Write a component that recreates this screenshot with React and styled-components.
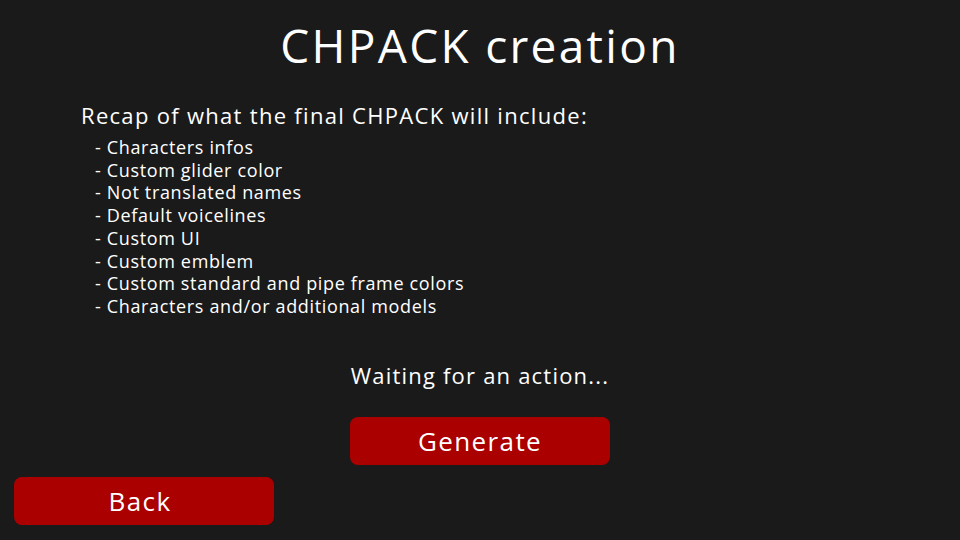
import React from "react";
import styled, { createGlobalStyle } from "styled-components";

const GlobalStyle = createGlobalStyle`
  html, body {
    margin: 0;
    padding: 0;
    background: #1a1a1a;
  }
  * {
    box-sizing: border-box;
  }
`;

const Screen = styled.div`
  width: 960px;
  height: 540px;
  background: #1a1a1a;
  color: #ffffff;
  font-family: "Open Sans", "Noto Sans", sans-serif;
  display: flex;
  flex-direction: column;
  overflow: hidden;
`;

const Title = styled.h1`
  margin: 15px 0 0;
  font-size: 46px;
  font-weight: 400;
  line-height: 60px;
  letter-spacing: 2.3px;
  text-align: center;
`;

const Recap = styled.div`
  margin-top: 25px;
  padding-left: 81px;
`;

const RecapHeading = styled.div`
  font-size: 22px;
  line-height: 30px;
  letter-spacing: 1.3px;
`;

const List = styled.ul`
  list-style: none;
  margin: 6px 0 0;
  padding-left: 14px;
`;

const Item = styled.li`
  font-size: 18px;
  line-height: 22.7px;
  letter-spacing: 0.65px;
`;

const Center = styled.div`
  display: flex;
  flex-direction: column;
  align-items: center;
  margin-top: 42px;
`;

const Status = styled.div`
  font-size: 22px;
  line-height: 30px;
  letter-spacing: 1.2px;
`;

const Button = styled.button`
  width: 260px;
  height: 48px;
  border: none;
  border-radius: 8px;
  background: #aa0000;
  color: #ffffff;
  font-family: inherit;
  font-size: 26px;
  letter-spacing: 1.4px;
  cursor: pointer;
  margin-top: ${(props) => props.top || "0px"};
  padding: 0 ${(props) => props.shift || "0px"} 0 0;
`;

const Footer = styled.div`
  margin-top: 12px;
  padding-left: 14px;
`;

const items = [
  "Characters infos",
  "Custom glider color",
  "Not translated names",
  "Default voicelines",
  "Custom UI",
  "Custom emblem",
  "Custom standard and pipe frame colors",
  "Characters and/or additional models",
];

const App = () => {
  return (
    <>
      <GlobalStyle />
      <Screen>
        <Title>CHPACK creation</Title>
        <Recap>
          <RecapHeading>Recap of what the final CHPACK will include:</RecapHeading>
          <List>
            {items.map((item) => (
              <Item key={item}>- {item}</Item>
            ))}
          </List>
        </Recap>
        <Center>
          <Status>Waiting for an action...</Status>
          <Button top="27px">Generate</Button>
        </Center>
        <Footer>
          <Button shift="8px">Back</Button>
        </Footer>
      </Screen>
    </>
  );
};

export default App;
